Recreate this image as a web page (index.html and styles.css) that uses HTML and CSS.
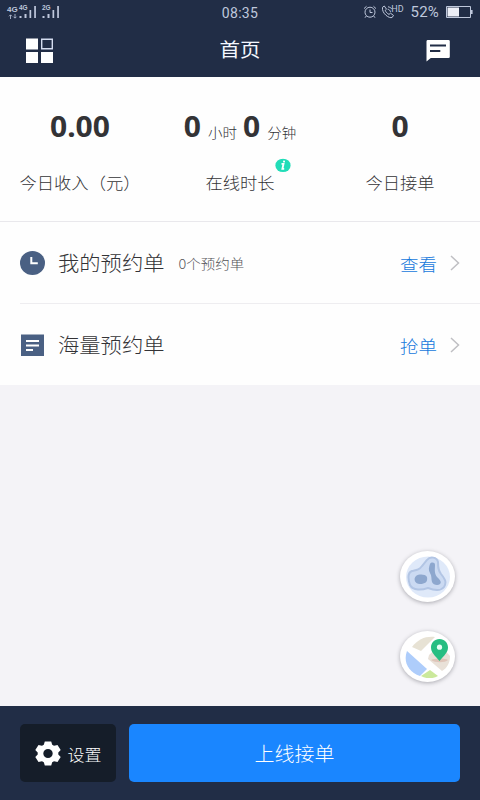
FILE: index.html
```html
<!DOCTYPE html>
<html lang="zh-CN">
<head>
<meta charset="utf-8">
<title>首页</title>
<link rel="stylesheet" href="styles.css">
</head>
<body>
<div class="app">
  <div class="status">
    <div class="signals">
      <div class="net"><b>4G</b>
        <svg width="10" height="5" viewBox="0 0 10 5"><path d="M2.5 5V1M1 2.3 2.5.8 4 2.3M7 0v4M5.500 2.700 7 4.200l1.500-1.500" fill="none" stroke="currentColor" stroke-width=".8"/></svg>
      </div>
      <div class="bars"><span>4G</span><svg width="18" height="12" viewBox="0 0 18 12"><path d="M.5 10h2v2h-2zM5.500 8h2v4h-2zM10.500 4h1.700v8h-1.700zM15.200 0h1.700v12h-1.700z" fill="currentColor"/></svg></div>
      <div class="bars second"><span>2G</span><svg width="18" height="12" viewBox="0 0 18 12"><path d="M.5 10h2v2h-2zM5.500 8h2v4h-2zM10.500 4h1.700v8h-1.700zM15.200 0h1.700v12h-1.700z" fill="currentColor"/></svg></div>
    </div>
    <time class="clock">08:35</time>
    <div class="system">
      <svg class="alarm" width="14" height="14" viewBox="0 0 14 14"><g fill="none" stroke="currentColor"><circle cx="7" cy="7.200" r="5"/><path d="M1 3.600 3.500 1.300M13 3.600 10.500 1.300M3.300 11 2 12.700M10.700 11l1.300 1.700M7 4.500v3h2.500"/></g></svg>
      <svg class="call" width="14" height="14" viewBox="0 0 14 14"><g fill="none" stroke="currentColor"><path d="M1.500 2.300 3.300 1l2.200 3.200-1.300 1.200c.8 1.800 2 3.100 3.800 4l1.500-1.200 3 2.200-1.300 2C8.500 14 .5 8.500 1.500 2.300zM6.700 4.200c1.400.2 2.500 1.200 2.800 2.700M7 1.800c1.600.2 3 1 3.900 2.300"/></g></svg>
      <span class="hd">HD</span>
      <span class="percent">52%</span>
      <svg width="27" height="12" viewBox="0 0 27 12"><path d="M.5.500h24v11H.5z" fill="none" stroke="currentColor"/><path d="M1.500 1.500H13v9H1.500z" fill="#eceef6"/><path d="M25 4h1.600v4H25z" fill="currentColor"/></svg>
    </div>
  </div>

  <header class="header">
    <svg width="27" height="26" viewBox="0 0 27 26"><path d="M0 .5h12v11H0zM0 14h12v11H0zM15 14h12v11H15z" fill="#fff"/><path d="M15.700 1.200h10.600v9.600H15.700z" fill="none" stroke="#d4dcef" stroke-width="1.400"/></svg>
    <h1>首页</h1>
    <svg width="24" height="22" viewBox="0 0 24 22"><path d="M1.500 0h21A1.300 1.300 0 0 1 23.800 1.300v15.400A1.300 1.300 0 0 1 22.500 18H4.800L.5 21.500V1.300A1.300 1.300 0 0 1 1.500 0z" fill="#fff"/><path d="M4 5.500h16M4 11h10.300" stroke="#212d46" stroke-width="2.200"/></svg>
  </header>

  <section class="stats">
    <div class="stat">
      <div class="value"><b>0.00</b></div>
      <div class="label">今日收入（元）</div>
    </div>
    <div class="stat">
      <div class="value"><b>0</b><small>小时</small><b>0</b><small>分钟</small></div>
      <div class="label"><span class="tagged">在线时长<svg class="info" width="16" height="15" viewBox="0 0 16 15"><ellipse cx="8" cy="7.500" rx="7.600" ry="7.100" fill="#22ddb8"/><path d="M9.200 2.500 8.900 4.300M6.500 6h2L7.400 11.200h1.800" fill="none" stroke="#fff" stroke-width="1.900"/></svg></span></div>
    </div>
    <div class="stat">
      <div class="value"><b>0</b></div>
      <div class="label">今日接单</div>
    </div>
  </section>

  <section class="list">
    <div class="row">
      <svg class="icon" width="26" height="24" viewBox="0 0 26 24"><ellipse cx="12.500" cy="12" rx="12.500" ry="12" fill="#4a6083"/><path d="M11.300 6v6.300h6.500" fill="none" stroke="#fff" stroke-width="2"/></svg>
      <span class="name">我的预约单</span>
      <span class="note">0个预约单</span>
      <a class="action">查看</a>
      <svg class="chevron" width="10" height="16" viewBox="0 0 10 16"><path d="M1 1l7.500 7L1 15" fill="none" stroke="#bfbfc3" stroke-width="1.500"/></svg>
    </div>
    <div class="row">
      <svg class="icon" width="26" height="24" viewBox="0 0 26 24"><path d="M1 1.500h23V23H1z" fill="#4a6083"/><path d="M6 8h13M6 12.500h13M6 17h7" stroke="#fff" stroke-width="1.900"/></svg>
      <span class="name">海量预约单</span>
      <a class="action">抢单</a>
      <svg class="chevron" width="10" height="16" viewBox="0 0 10 16"><path d="M1 1l7.500 7L1 15" fill="none" stroke="#bfbfc3" stroke-width="1.500"/></svg>
    </div>
  </section>

  <main class="canvas">
    <div class="float">
      <svg width="44" height="42" viewBox="0 0 44 42"><ellipse cx="22" cy="21" rx="22" ry="20.500" fill="#dfe9f9"/><path d="M21 4c3-4 10-3 11 2 0 5 0 8 3 12 4 5 6 8 3 13-4 5-11 3-16 1-6 2-15 3-18-3-2-6-3-12 2-14 5-1 7-1 10-5z" fill="#cbdaf2" stroke="#b2c5e4" stroke-width="2"/><path d="M24 8c1-2 5-2 5 1 0 4-1 8 2 12 3 3 5 5 3 7-2 2-7 1-8-2-1-3 0-6-2-9-2-3-1-6 0-9zM10 20c3-2 9-2 11 1 1 5-2 7-7 7-5 0-7-5-4-8z" fill="#8da7ce"/></svg>
    </div>
    <div class="float">
      <svg width="46" height="42" viewBox="0 0 46 42"><path d="M7 11C13 3 21 0 30 1L16 15z" fill="#e7e2d4"/><path d="M2 15l20 18-7 7C3 36-2 25 2 15z" fill="#aecdfb"/><path d="M25 34l8 6c-5 3-12 3-17 0z" fill="#cbe99b"/><path d="M24 19l11-10 10 11c0 7-3 12-8 15L23 23z" fill="#e9e1d8"/><path d="M26 24c4-2 14-2 17 0-3 3-13 3-17 0z" fill="#dfc5b9"/><path d="M34.500 3c5 0 8.500 4 8.500 8.500 0 5-4 8-8.500 13.500C30 19.500 26 16.500 26 11.500 26 7 29.500 3 34.500 3z" fill="#27be82"/><circle cx="34.500" cy="11.200" r="2.600" fill="#e8fff5"/></svg>
    </div>
  </main>

  <footer class="footer">
    <button class="settings">
      <svg width="26" height="25" viewBox="0 0 26 25"><path fill="#fff" fill-rule="evenodd" d="M9.800.5h6.400l1 3.200 1.800 1.100 3.500-.9 3.200 5-2.400 2.500v2.200l2.400 2.500-3.200 5-3.500-.9-1.800 1.100-1 3.200H9.800l-1-3.200L7 20.200l-3.500.9-3.200-5 2.400-2.500v-2.200L.3 8.900l3.200-5 3.500.9 1.800-1.100zM13 8a4.700 4.500 0 1 0 0 9 4.700 4.500 0 1 0 0-9z"/></svg>
      <span>设置</span>
    </button>
    <button class="online"><span>上线接单</span></button>
  </footer>
</div>
</body>
</html>
```

FILE: styles.css
```css
* { box-sizing: border-box; }

body {
  margin: 0;
  font-family: "Noto Sans CJK SC", "Noto Sans", sans-serif;
  color: #333336;
}

svg { display: block; flex: none; }

.app {
  width: 480px;
  height: 800px;
  display: flex;
  flex-direction: column;
  background: #f4f3f7;
}

.status {
  height: 24px;
  padding: 0 7px;
  display: grid;
  grid-template-columns: 1fr auto 1fr;
  align-items: center;
  background: #212d46;
  color: #bfc8dc;
}

.signals { display: flex; align-items: flex-start; height: 14px; }
.net { width: 12px; font: 700 8px/9px "Liberation Sans", sans-serif; }
.net b { display: block; }
.net svg { margin-left: 1px; }
.bars {
  position: relative;
  width: 18px;
  padding-top: 1px;
}
.bars.second { margin-left: 5px; }
.bars span {
  position: absolute;
  left: 0;
  top: -1px;
  font: 700 6.500px/8px "Liberation Sans", sans-serif;
}

.clock { font: 400 14px/20px Roboto, sans-serif; letter-spacing: .3px; padding-top: 1px; }

.system { display: flex; align-items: center; justify-content: flex-end; }
.call { margin-left: 4px; }
.hd { font: 400 9px/10px Roboto, sans-serif; margin: -6px 0 0 -4px; }
.percent { font: 400 15px/20px Roboto, sans-serif; margin: 0 7px 0 7px; letter-spacing: .2px; }

.header {
  height: 53px;
  padding: 0 30px 0 26px;
  display: grid;
  grid-template-columns: 1fr auto 1fr;
  align-items: center;
  background: #212d46;
}
.header h1 {
  margin: 0 0 3px 4px;
  color: #f4f7ff;
  font-size: 20.500px;
  line-height: 30px;
  font-weight: 400;
  transform: scaleY(.94);
}
.header svg:last-child { justify-self: end; }

.stats {
  height: 145px;
  display: grid;
  grid-template-columns: repeat(3, 160px);
  background: #fefefe;
  border-bottom: 1px solid #e9e8ec;
}
.stat { padding-top: 30px; text-align: center; white-space: nowrap; }
.value {
  height: 40px;
  display: flex;
  justify-content: center;
  align-items: baseline;
  line-height: 40px;
}
.value b { font-family: "Noto Sans", sans-serif; font-size: 30px; transform: scaleY(.95); }
.value small { font-size: 14.500px; font-weight: 300; margin: 0 6px 0 7px; transform: scaleY(.94); }
.value small:last-child { margin-right: 0; }
.label {
  margin-top: 22px;
  font-size: 17.300px;
  font-weight: 300;
  line-height: 26px;
  transform: scaleY(.95);
}
.tagged { position: relative; }
.info { position: absolute; right: -16px; top: -12px; }

.list { height: 163px; background: #fefefe; }
.row {
  height: 81px;
  margin-left: 20px;
  padding-right: 20px;
  display: flex;
  align-items: center;
}
.row:first-child { height: 82px; border-bottom: 1px solid #eeedf0; }
.name { margin-left: 12px; font-size: 21.300px; font-weight: 300; transform: scaleY(.94); }
.note { margin-left: 14px; font-size: 14.500px; font-weight: 300; color: #555559; transform: scaleY(.94); }
.action { margin-left: auto; font-size: 18.500px; font-weight: 300; color: #1679dc; transform: scaleY(.94); }
.chevron { margin-left: 13px; }

.canvas {
  flex: 1;
  padding: 0 25px 24px 0;
  display: flex;
  flex-direction: column;
  align-items: flex-end;
  justify-content: flex-end;
  gap: 29px;
}
.float {
  width: 55px;
  height: 51px;
  border-radius: 50%;
  background: #fff;
  box-shadow: 0 1px 4px rgba(60, 60, 70, .4);
  display: flex;
  align-items: center;
  justify-content: center;
}

.footer {
  height: 94px;
  padding: 18px 20px;
  display: flex;
  gap: 13px;
  background: #212d46;
}
.footer button {
  height: 58px;
  border: 0;
  border-radius: 5px;
  padding: 0;
  display: flex;
  align-items: center;
  justify-content: center;
  font-family: inherit;
  font-weight: 300;
  color: #fff;
}
.footer span { transform: scaleY(.94); }
.footer .settings { width: 96px; gap: 7px; background: #151d29; font-size: 17px; }
.footer .online { flex: 1; background: #1a86ff; font-size: 20px; }
```
